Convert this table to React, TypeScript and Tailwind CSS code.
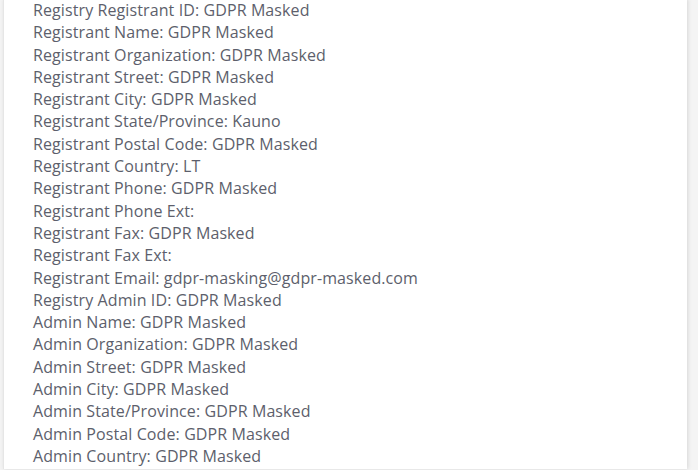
const lines = [
  "Registry Registrant ID: GDPR Masked",
  "Registrant Name: GDPR Masked",
  "Registrant Organization: GDPR Masked",
  "Registrant Street: GDPR Masked",
  "Registrant City: GDPR Masked",
  "Registrant State/Province: Kauno",
  "Registrant Postal Code: GDPR Masked",
  "Registrant Country: LT",
  "Registrant Phone: GDPR Masked",
  "Registrant Phone Ext:",
  "Registrant Fax: GDPR Masked",
  "Registrant Fax Ext:",
  "Registrant Email: gdpr-masking@gdpr-masked.com",
  "Registry Admin ID: GDPR Masked",
  "Admin Name: GDPR Masked",
  "Admin Organization: GDPR Masked",
  "Admin Street: GDPR Masked",
  "Admin City: GDPR Masked",
  "Admin State/Province: GDPR Masked",
  "Admin Postal Code: GDPR Masked",
  "Admin Country: GDPR Masked",
];

export default function App() {
  return (
    <div className="h-[470px] overflow-hidden bg-[#f4f4f4]">
      <div className="ml-[3px] mr-[11px] h-full border-l border-[#e6e6e6] bg-white shadow-[1px_0_4px_rgba(0,0,0,0.12)]">
        <div
          className="-mt-[1px] pl-[29px] text-[16px] leading-[22.3px] tracking-[0.1px] text-[#5d5f6c]"
          style={{ fontFamily: "'Open Sans', Lato, sans-serif" }}
        >
          {lines.map((line) => (
            <div key={line}>{line}</div>
          ))}
        </div>
      </div>
    </div>
  );
}
